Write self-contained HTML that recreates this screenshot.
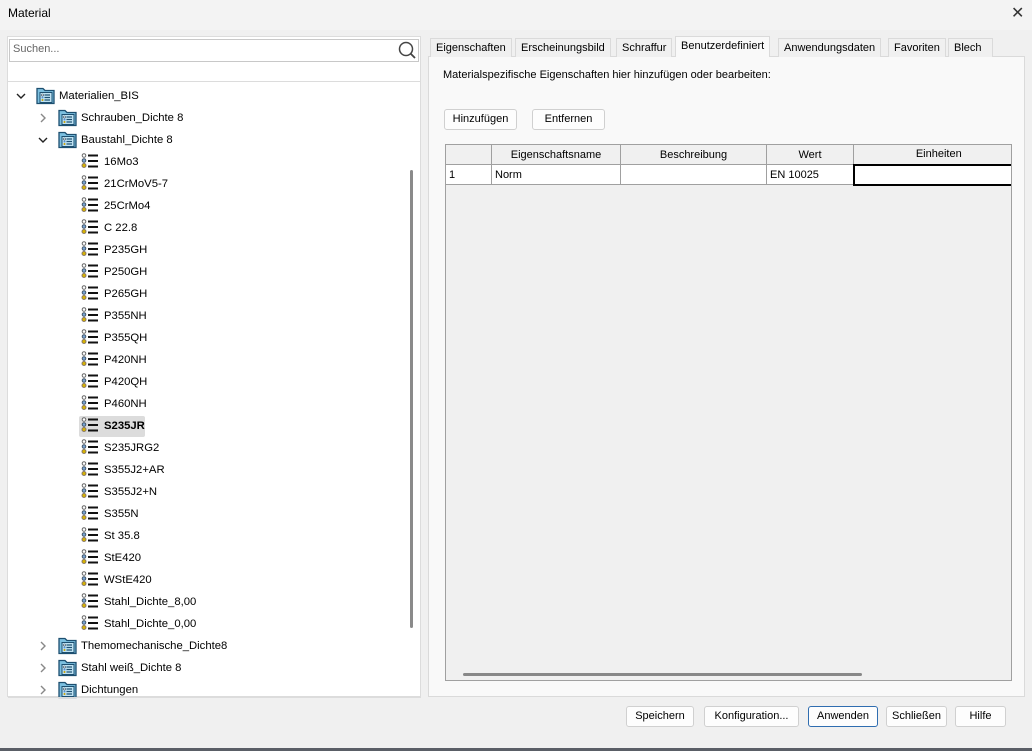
<!DOCTYPE html>
<html><head><style>
*{box-sizing:border-box;margin:0;padding:0}
body{width:1032px;height:751px;background:#f0f0f0;font-family:"Segoe UI","Liberation Sans",sans-serif;font-size:11px;color:#000;position:relative;overflow:hidden}
.a{position:absolute}
.title{left:0;top:0;width:1032px;height:30px;background:#f3f3f3}
.row{position:absolute;height:22px;line-height:22px;white-space:nowrap;font-size:11.3px}
.btn{position:absolute;height:21px;border:1px solid #d0d0d0;background:#fdfdfd;border-radius:3px;text-align:center;line-height:19px}
.tab{position:absolute;top:38px;height:19px;line-height:18px;padding:0 5px;border:1px solid #dadada;border-bottom:none;background:#f0f0f0}
td,th{border:1px solid #a0a0a0;height:20px;font-weight:normal;padding:0 3px;text-align:left}
th{text-align:center;background:#f0f0f0}
</style></head><body>
<div class="a title"></div>
<div class="a" style="left:8px;top:6px;font-size:12px">Material</div>
<div class="a" style="left:1011px;top:3px;font-size:16px;color:#333">✕</div>

<div class="a" style="left:7px;top:36px;width:414px;height:661px;border:1px solid #dcdcdc;background:#fff"></div>
<div class="a" style="left:9px;top:39px;width:410px;height:23px;border:1px solid #c8c8c8;background:#fff"></div>
<div class="a" style="left:13px;top:43px;color:#666;font-size:11px">Suchen...</div>
<svg class="a" style="left:397px;top:40px" width="20" height="20"><circle cx="9" cy="9" r="6.5" fill="none" stroke="#444" stroke-width="1.5"/><line x1="13.5" y1="13.5" x2="18" y2="18" stroke="#444" stroke-width="1.8"/></svg>
<div class="a" style="left:8px;top:81px;width:412px;height:1px;background:#dcdcdc"></div>
<div class="a" style="left:410px;top:170px;width:3px;height:458px;background:#8a8a8a;border-radius:2px"></div>

<div id="tree"></div>

<div class="a" style="left:428px;top:56px;width:597px;height:641px;border:1px solid #dadada;background:#f9f9f9"></div>
<div class="tab" style="left:430px">Eigenschaften</div>
<div class="tab" style="left:515px">Erscheinungsbild</div>
<div class="tab" style="left:616px">Schraffur</div>
<div class="tab" style="left:675px;top:36px;height:21px;background:#f9f9f9;border-color:#dadada">Benutzerdefiniert</div>
<div class="tab" style="left:778px">Anwendungsdaten</div>
<div class="tab" style="left:888px">Favoriten</div>
<div class="tab" style="left:948px;width:45px">Blech</div>
<div class="a" style="left:443px;top:69px">Materialspezifische Eigenschaften hier hinzufügen oder bearbeiten:</div>
<div class="btn" style="left:444px;top:109px;width:73px">Hinzufügen</div>
<div class="btn" style="left:532px;top:109px;width:73px">Entfernen</div>

<div class="a" style="left:445px;top:144px;width:567px;height:537px;border:1px solid #a0a0a0;background:#f0f0f0;overflow:hidden">
<table style="border-collapse:collapse;position:absolute;left:-1px;top:-1px;width:580px">
<tr><th style="width:46px"></th><th style="width:129px">Eigenschaftsname</th><th style="width:146px">Beschreibung</th><th style="width:87px">Wert</th><th>Einheiten</th></tr>
<tr style="background:#fff"><td>1</td><td>Norm</td><td></td><td>EN 10025</td><td style="border:2px solid #000"></td></tr>
</table>
<div class="a" style="left:17px;top:528px;width:399px;height:3px;background:#888;border-radius:2px"></div>
</div>

<div class="btn" style="left:626px;top:706px;width:68px">Speichern</div>
<div class="btn" style="left:704px;top:706px;width:95px">Konfiguration...</div>
<div class="btn" style="left:808px;top:706px;width:70px;border-color:#2f6db0">Anwenden</div>
<div class="btn" style="left:886px;top:706px;width:61px">Schließen</div>
<div class="btn" style="left:955px;top:706px;width:51px">Hilfe</div>
<div class="a" style="left:0;top:748px;width:1032px;height:3px;background:#5a5e66"></div>

<script>
const folder='<svg width="19" height="18"><path d="M1 1.5h6l2 2h9v13H1z" fill="#7cc0e0" stroke="#1d4f70" stroke-width="1.3"/><rect x="4" y="5.5" width="12" height="10" fill="#bfe3f3" stroke="#1d4f70"/><circle cx="6.5" cy="8" r="1" fill="#fff" stroke="#345" stroke-width=".6"/><circle cx="6.5" cy="10.5" r="1" fill="#5b8fd0"/><circle cx="6.5" cy="13" r="1" fill="#c9a000"/><line x1="8.5" y1="8" x2="14" y2="8" stroke="#1d4f70" stroke-width="1.2"/><line x1="8.5" y1="10.5" x2="14" y2="10.5" stroke="#1d4f70" stroke-width="1.2"/><line x1="8.5" y1="13" x2="14" y2="13" stroke="#1d4f70" stroke-width="1.2"/></svg>';
const mat='<svg width="19" height="17"><circle cx="3" cy="2.5" r="1.8" fill="#fff" stroke="#666"/><circle cx="3" cy="7.5" r="1.8" fill="#7aa7d8" stroke="#456"/><circle cx="3" cy="12.5" r="2" fill="#d8b400" stroke="#876"/><rect x="7" y="1.5" width="10" height="2" fill="#111"/><rect x="7" y="7" width="10" height="2" fill="#111"/><rect x="7" y="12.5" width="10" height="2" fill="#111"/></svg>';
const items=[[0,'v','Materialien_BIS',1],[1,'>','Schrauben_Dichte 8',1],[1,'v','Baustahl_Dichte 8',1],
...['16Mo3','21CrMoV5-7','25CrMo4','C 22.8','P235GH','P250GH','P265GH','P355NH','P355QH','P420NH','P420QH','P460NH','S235JR','S235JRG2','S355J2+AR','S355J2+N','S355N','St 35.8','StE420','WStE420','Stahl_Dichte_8,00','Stahl_Dichte_0,00'].map(t=>[2,'',t,0]),
[1,'>','Themomechanische_Dichte8',1],[1,'>','Stahl weiß_Dichte 8',1],[1,'>','Dichtungen',1]];
let h='';items.forEach((it,i)=>{const y=85+i*22;const [l,a,t,f]=it;const x=[36,58,81][l];
if(a){h+=`<div class="row" style="left:${x-20}px;top:${y}px">${a=='v'?'<svg width="10" height="22"><path d="M1 9l4 4 4-4" fill="none" stroke="#222" stroke-width="1.4"/></svg>':'<svg width="10" height="22"><path d="M3 7l4 4-4 4" fill="none" stroke="#888" stroke-width="1.4"/></svg>'}</div>`}
const sel=t=='S235JR';
if(sel)h+=`<div class="a" style="left:79px;top:${y+1}px;width:66px;height:21px;background:#dcdcdc;border-radius:2px"></div>`;
h+=`<div class="a" style="left:${x}px;top:${y+2}px">${f?folder:mat}</div><div class="row" style="left:${x+23}px;top:${y}px;${sel?'font-weight:bold':''}">${t}</div>`;});
document.getElementById('tree').innerHTML=h;
</script>
<div class="a" style="left:8px;top:697px;width:413px;height:1px;background:#dcdcdc"></div>
</body></html>
